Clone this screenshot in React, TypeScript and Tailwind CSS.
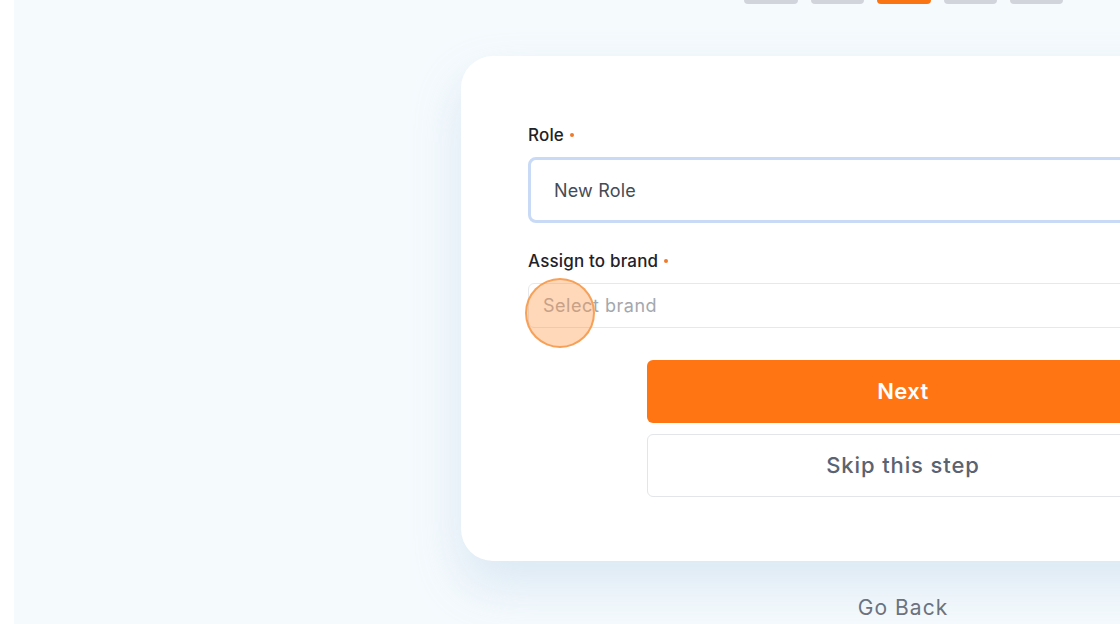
import React from "react";

function Label({ text }: { text: string }) {
  return (
    <div className="flex items-center gap-[6px] text-[17px] font-medium leading-[24px] tracking-[0.01em] text-[#1f2228]">
      <span>{text}</span>
      <span className="inline-block h-[4px] w-[4px] rounded-full bg-[#f07a2a]" />
    </div>
  );
}

export default function App() {
  return (
    <div
      className="flex h-[624px] w-[1120px] overflow-hidden bg-white"
      style={{ fontFamily: "Inter, 'Noto Sans', sans-serif" }}
    >
      <div className="w-[14px] shrink-0 bg-white" />
      <div className="flex w-[1778px] shrink-0 flex-col items-center bg-[#f5fafd]">
        <div className="-mt-1 flex gap-[13px]">
          <div className="h-[8px] w-[54px] rounded-[4px] bg-[#d1d5db]" />
          <div className="h-[8px] w-[53px] rounded-[4px] bg-[#d1d5db]" />
          <div className="h-[8px] w-[54px] rounded-[4px] bg-[#fb7413]" />
          <div className="h-[8px] w-[53px] rounded-[4px] bg-[#d1d5db]" />
          <div className="h-[8px] w-[53px] rounded-[4px] bg-[#d1d5db]" />
        </div>

        <div className="mt-[52px] flex w-[884px] flex-col rounded-[32px] bg-white px-[67px] pb-[64px] pt-[67px] shadow-[0_24px_48px_rgba(186,210,232,0.45)]">
          <Label text="Role" />
          <div className="mt-[10px] flex h-[66px] items-center rounded-[8px] border-[3px] border-[#c8daf6] bg-white pl-[23px] text-[18px] tracking-[0.01em] text-[#454b55]">
            New Role
          </div>

          <div className="mt-[26px]">
            <Label text="Assign to brand" />
          </div>
          <div className="relative mt-[10px] flex h-[45px] items-center rounded-[6px] border border-[#e6e8eb] bg-white pl-[14px] text-[18px] tracking-[0.03em] text-[#a4a8ae]">
            Select brand
            <div className="absolute left-[-4px] top-[-6px] h-[70px] w-[70px] rounded-full border-2 border-[rgba(245,150,70,0.85)] bg-[rgba(255,150,70,0.38)]" />
          </div>

          <div className="mt-[32px] flex flex-col items-center gap-[11px]">
            <button className="flex h-[63px] w-[512px] items-center justify-center rounded-[6px] bg-[#ff7514] text-[22px] font-semibold tracking-[0.02em] text-white">
              Next
            </button>
            <button className="flex h-[63px] w-[512px] items-center justify-center rounded-[6px] border border-[#e3e5e8] bg-white text-[22px] font-medium tracking-[0.04em] text-[#5b6270]">
              Skip this step
            </button>
          </div>
        </div>

        <div className="mt-[31px] text-[21px] tracking-[0.05em] text-[#6b7280]">Go Back</div>
      </div>
    </div>
  );
}
